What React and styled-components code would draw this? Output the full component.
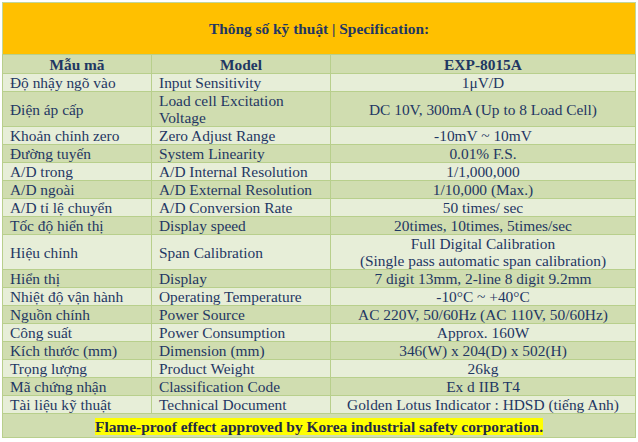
import React from 'react';
import styled, { createGlobalStyle } from 'styled-components';

const GlobalStyle = createGlobalStyle`
    body {
        margin: 2px;
        background: #fff;
        font-family: "Liberation Serif", "Times New Roman", serif;
    }
`;

const SpecTable = styled.table`
    width: 634px;
    border-collapse: collapse;
    border: 1px solid #c2d69b;
    color: #1f3763;
    font-size: 15.4px;
    line-height: 17px;
    table-layout: fixed;
`;

const TitleCell = styled.th`
    background: #ffc000;
    height: 51px;
    padding: 0;
    text-align: center;
    vertical-align: middle;
    font-weight: bold;
`;

const Row = styled.tr`
    background: ${props => props.$dark ? '#d0ddb0' : '#e7eed8'};
`;

const HeaderCell = styled.th`
    border: 1px solid #b8cf8c;
    padding: 1px 7px 0;
    text-align: center;
    font-weight: bold;
`;

const Cell = styled.td`
    border: 1px solid #b8cf8c;
    padding: 0 7px;
    text-align: ${props => props.$center ? 'center' : 'left'};
    vertical-align: middle;
`;

const NoteCell = styled.td`
    border: 1px solid #b8cf8c;
    padding: 4px 0 2px;
    text-align: center;
    font-weight: bold;
`;

const Highlight = styled.span`
    background: #ffff00;
    color: #1f2a44;
`;

const specs = [
    ['Độ nhậy ngõ vào', 'Input Sensitivity', '1μV/D'],
    ['Điện áp cấp', 'Load cell Excitation Voltage', 'DC 10V, 300mA (Up to 8 Load Cell)'],
    ['Khoản chỉnh zero', 'Zero Adjust Range', '-10mV ~ 10mV'],
    ['Đường tuyến', 'System Linearity', '0.01% F.S.'],
    ['A/D trong', 'A/D Internal Resolution', '1/1,000,000'],
    ['A/D ngoài', 'A/D External Resolution', '1/10,000 (Max.)'],
    ['A/D tỉ lệ chuyển', 'A/D Conversion Rate', '50 times/ sec'],
    ['Tốc độ hiển thị', 'Display speed', '20times, 10times, 5times/sec'],
    ['Hiệu chỉnh', 'Span Calibration', 'Full Digital Calibration\n(Single pass automatic span calibration)'],
    ['Hiển thị', 'Display', '7 digit 13mm, 2-line 8 digit 9.2mm'],
    ['Nhiệt độ vận hành', 'Operating Temperature', '-10°C ~ +40°C'],
    ['Nguồn chính', 'Power Source', 'AC 220V, 50/60Hz (AC 110V, 50/60Hz)'],
    ['Công suất', 'Power Consumption', 'Approx. 160W'],
    ['Kích thước (mm)', 'Dimension (mm)', '346(W) x 204(D) x 502(H)'],
    ['Trọng lượng', 'Product Weight', '26kg'],
    ['Mã chứng nhận', 'Classification Code', 'Ex d IIB T4'],
    ['Tài liệu kỹ thuật', 'Technical Document', 'Golden Lotus Indicator : HDSD (tiếng Anh)'],
];

function App() {
    return (
        <>
            <GlobalStyle />
            <SpecTable>
                <colgroup>
                    <col style={{ width: '149px' }} />
                    <col style={{ width: '179px' }} />
                    <col />
                </colgroup>
                <thead>
                    <tr>
                        <TitleCell colSpan={3}>Thông số kỹ thuật | Specification:</TitleCell>
                    </tr>
                    <Row $dark>
                        <HeaderCell>Mẫu mã</HeaderCell>
                        <HeaderCell>Model</HeaderCell>
                        <HeaderCell>EXP-8015A</HeaderCell>
                    </Row>
                </thead>
                <tbody>
                    {specs.map(([vi, en, value], idx) => (
                        <Row key={idx} $dark={idx % 2 === 1}>
                            <Cell>{vi}</Cell>
                            <Cell>{en}</Cell>
                            <Cell $center>
                                {value.split('\n').map((line, i) => (
                                    <React.Fragment key={i}>{i > 0 && <br />}{line}</React.Fragment>
                                ))}
                            </Cell>
                        </Row>
                    ))}
                    <Row $dark>
                        <NoteCell colSpan={3}>
                            <Highlight>Flame-proof effect approved by Korea industrial safety corporation.</Highlight>
                        </NoteCell>
                    </Row>
                </tbody>
            </SpecTable>
        </>
    );
}

export default App;
